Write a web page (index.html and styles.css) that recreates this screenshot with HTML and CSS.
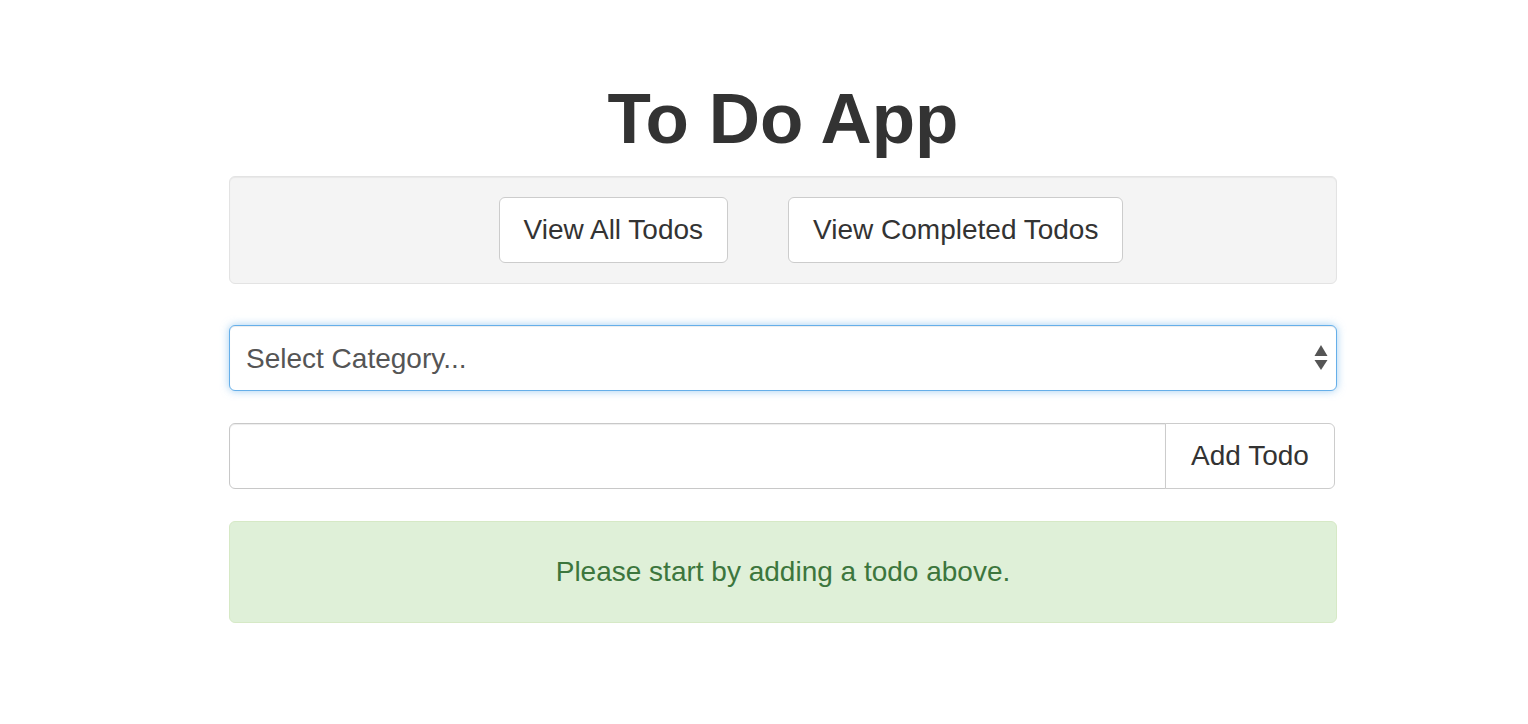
FILE: index.html
```html
<!DOCTYPE html>
<html lang="en">
<head>
<meta charset="utf-8">
<title>To Do App</title>
<link rel="stylesheet" href="styles.css">
</head>
<body>
<div class="container">
  <h1 class="title">To Do App</h1>
  <div class="well">
    <button class="btn">View All Todos</button>
    <button class="btn">View Completed Todos</button>
  </div>
  <div class="select-wrap">
    <select class="select">
      <option>Select Category...</option>
    </select>
    <svg class="select-arrows" width="14" height="26" viewBox="0 0 14 26" aria-hidden="true">
      <polygon points="7,0 13.5,11 0.5,11" fill="#555"/>
      <polygon points="0.5,15 13.5,15 7,25" fill="#555"/>
    </svg>
  </div>
  <div class="input-group">
    <input class="text-input" type="text">
    <button class="btn btn-addon">Add Todo</button>
  </div>
  <div class="alert">Please start by adding a todo above.</div>
</div>
</body>
</html>
```
FILE: styles.css
```css
* { box-sizing: border-box; }
html, body { margin: 0; padding: 0; background: #fff; }
body {
  font-family: "Liberation Sans", Arial, Helvetica, sans-serif;
  color: #333;
}
.container {
  width: 1108px;
  margin-left: 229px;
  padding-top: 79px;
}
.title {
  margin: 0 0 18px;
  font-size: 71px;
  line-height: 79px;
  font-weight: 700;
  text-align: center;
  color: #333;
}
.well {
  display: flex;
  justify-content: center;
  gap: 60px;
  padding: 20px 0 20px 56px;
  background: #f4f4f4;
  border: 1px solid #e3e3e3;
  border-radius: 6px;
  box-shadow: inset 0 1px 1px rgba(0,0,0,.05);
}
.btn {
  height: 66px;
  padding: 0 24px;
  font-family: inherit;
  font-size: 28px;
  color: #333;
  background: #fff;
  border: 1px solid #ccc;
  border-radius: 6px;
  cursor: pointer;
}
.select-wrap {
  position: relative;
  margin-top: 41px;
}
.select {
  display: block;
  width: 100%;
  height: 66px;
  padding: 0 40px 0 16px;
  font-family: inherit;
  font-size: 28px;
  color: #555;
  background: #fff;
  border: 1px solid #66afe9;
  border-radius: 6px;
  -webkit-appearance: none;
  appearance: none;
  outline: none;
  box-shadow: inset 0 1px 1px rgba(0,0,0,.075), 0 0 8px rgba(102,175,233,.6);
}
.select-arrows {
  position: absolute;
  right: 9px;
  top: 20px;
  pointer-events: none;
}
.input-group {
  display: flex;
  width: 1106px;
  margin-top: 32px;
}
.text-input {
  flex: 1;
  height: 66px;
  padding: 0 16px;
  font-family: inherit;
  font-size: 28px;
  border: 1px solid #c8c8c8;
  border-radius: 6px 0 0 6px;
  box-shadow: inset 0 1px 1px rgba(0,0,0,.075);
  outline: none;
}
.btn-addon {
  width: 170px;
  padding: 0;
  margin-left: -1px;
  border-radius: 0 6px 6px 0;
}
.alert {
  margin-top: 32px;
  padding: 30px 15px;
  font-size: 28px;
  line-height: 40px;
  text-align: center;
  color: #3c763d;
  background: #dff0d8;
  border: 1px solid #d6e9c6;
  border-radius: 6px;
}
```
